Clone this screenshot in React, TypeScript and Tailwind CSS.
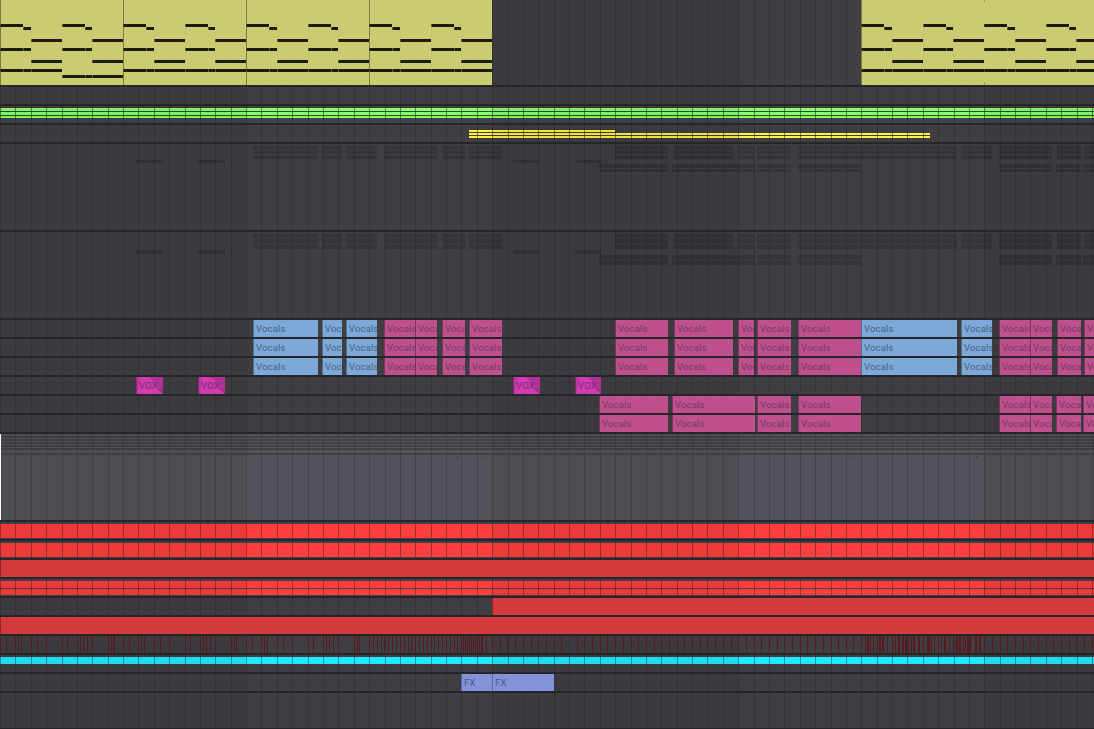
import React from 'react';

type Span = [start: number, end: number];
type Tone = 'blue' | 'pink' | 'vox' | 'fx' | 'red';

interface Clip {
  start: number;
  end: number;
  tone: Tone;
  label?: string;
}

interface NoteRow {
  y: number;
  h: number;
  spans: Span[];
}

const WIDTH = 1094;
const BEAT = 15.38;

const beats = Array.from({ length: 72 }, (_, i) => Math.round(i * BEAT));
const full: Span[] = [[0, WIDTH]];

const toneClasses: Record<Tone, string> = {
  blue: 'bg-[#7ca9d8] border-[#526f8e] text-[#48627d]',
  pink: 'bg-[#bf508d] border-[#7b3760] text-[#6f3c62]',
  vox: 'bg-[#d33bb2] border-[#852a72] text-[#743169]',
  fx: 'bg-[#8393d9] border-[#5a659a] text-[#4f5981]',
  red: 'bg-[#d43a3c] border-[#8a292c] text-[#8a292c]',
};

const clips = (tone: Tone, label: string, spans: Span[]): Clip[] =>
  spans.map(([start, end]) => ({ start, end, tone, label }));

const leadClips: Clip[] = [
  ...clips('blue', 'Vocals', [[253, 318], [322, 342], [346, 377]]),
  ...clips('pink', 'Vocals', [
    [384, 415], [415, 437], [442, 465], [469, 502], [615, 668], [674, 733], [738, 754], [757, 791], [798, 861],
  ]),
  ...clips('blue', 'Vocals', [[861, 957], [961, 992]]),
  ...clips('pink', 'Vocals', [[999, 1030], [1030, 1052], [1057, 1081], [1084, 1094]]),
];

const backingClips = clips('pink', 'Vocals', [
  [599, 668], [672, 755], [757, 791], [798, 861], [999, 1030], [1030, 1052], [1056, 1081], [1083, 1094],
]);

const voxSpans: Span[] = [[136, 163], [198, 225], [513, 540], [575, 601]];

const leadSpans: Span[] = [
  [253, 318], [322, 342], [346, 377], [384, 437], [442, 465], [469, 502], [615, 668], [674, 733],
  [738, 754], [757, 791], [798, 957], [961, 992], [999, 1052], [1057, 1081], [1084, 1094],
];

const backingSpans: Span[] = [
  [599, 668], [672, 755], [757, 791], [798, 861], [999, 1052], [1056, 1081], [1083, 1094],
];

const groupA: NoteRow[] = [
  { y: 2, h: 4, spans: leadSpans },
  { y: 7, h: 3, spans: leadSpans },
  { y: 11, h: 4, spans: leadSpans },
  { y: 16, h: 3, spans: voxSpans },
  { y: 20, h: 4, spans: backingSpans },
  { y: 25, h: 3, spans: backingSpans },
];

const groupB: NoteRow[] = [
  { y: 2, h: 4, spans: leadSpans },
  { y: 7, h: 5, spans: leadSpans },
  { y: 13, h: 4, spans: leadSpans },
  { y: 18, h: 4, spans: voxSpans },
  { y: 23, h: 5, spans: backingSpans },
  { y: 29, h: 4, spans: backingSpans },
];

const steady = Array.from({ length: 25 }, (_, i) => Math.round((86 + i) * 7.69));

const hits: number[] = [
  0, 6, 15, 18, 21, 31, 37, 46, 62, 67, 77, 80, 83, 87, 92, 108, 111, 113, 114, 123, 129, 138, 141, 144, 154, 160,
  169, 185, 190, 200, 203, 206, 210, 215, 231, 234, 236, 246, 252, 261, 264, 267, 277, 283, 292, 308, 313, 323, 326,
  329, 333, 338, 354, 357, 359, 369, 373, 377, 381, 384, 388, 392, 396, 400, 404, 408, 411, 415, 419, 423, 427, 431,
  434, 438, 442, 446, 450, 454, 457, 461, 463, 465, 467, 469, 471, 473, 475, 477, 479, 481, 482, 486, 492, 500, 507,
  515, 523, 531, 538, 546, 554, 561, 577, 584, 592, 600, 607, 615, 623, 631, 638, 646, 654, ...steady, 853, 861, 865,
  867, 868, 870, 873, 877, 879, 880, 882, 883, 887, 892, 895, 898, 899, 902, 903, 905, 906, 908, 911, 913, 914, 918,
  919, 923, 927, 928, 929, 931, 934, 938, 941, 944, 945, 949, 953, 956, 957, 959, 960, 963, 965, 967, 968, 969, 970,
  975, 976, 979, 980, 984, 992, 1000, 1007, 1015, 1023, 1030, 1038, 1046, 1053, 1061, 1069, 1076, 1084, 1092,
];

// Chord pattern, relative to the start of a bar
const chordNotes: [x: number, end: number, y: number][] = [
  [0, 23, 24], [23, 31, 27], [62, 85, 24], [85, 92, 27],
  [31, 62, 39], [92, 123, 39],
  [0, 23, 48], [23, 31, 48], [62, 85, 48], [85, 92, 48],
  [31, 62, 60], [92, 123, 60],
];

const bassNotes: Span[] = [[0, 23], [23, 31], [31, 62], [62, 85], [85, 92], [92, 123]];

const Lane: React.FC<{ height: number; className?: string; children?: React.ReactNode }> = ({
  height,
  className = '',
  children,
}) => (
  <div className="shrink-0">
    <div className={`overflow-hidden ${className}`} style={{ height }}>
      {children}
    </div>
    <div className="relative z-20 h-0.5 bg-[#26252a]" />
  </div>
);

const ClipLane: React.FC<{ items: Clip[] }> = ({ items }) => (
  <Lane height={17}>
    <div className="relative z-20 flex h-full">
      {items.map((clip, i) => (
        <div
          key={clip.start}
          className={`relative flex h-full shrink-0 items-center overflow-hidden border-l pl-0.5 text-[9.5px] leading-none tracking-[0.15px] whitespace-nowrap ${toneClasses[clip.tone]}`}
          style={{ width: clip.end - clip.start, marginLeft: clip.start - (i > 0 ? items[i - 1].end : 0) }}
        >
          {clip.tone === 'vox' && (
            <svg className="absolute inset-0 h-full w-full" viewBox="0 0 26 17" preserveAspectRatio="none">
              <path d="M11 0 C16 3 20 8 22 14 L26 17 V0 Z" fill="#b03299" />
              <path d="M21 12 L26 17 V14 L23 14 Z" fill="#84397a" />
              <path d="M0 0 H4 C2 4 2 12 1 17 H0 Z" fill="#bd36a1" />
            </svg>
          )}
          <span className="relative">{clip.label}</span>
        </div>
      ))}
    </div>
  </Lane>
);

const NoteLane: React.FC<{
  height: number;
  rows: NoteRow[];
  color: string;
  className?: string;
  lines?: number;
}> = ({ height, rows, color, className = '', lines = 0 }) => (
  <Lane height={height} className={className}>
    <svg width={WIDTH} height={height} shapeRendering="crispEdges" className="block">
      {rows.map((row) =>
        row.spans.map(([start, end]) => (
          <g key={`${row.y}-${start}`}>
            <rect x={start} y={row.y} width={end - start} height={row.h} fill={color} />
            {lines > 0 &&
              beats
                .filter((x) => x >= start && x < end)
                .map((x) => <rect key={x} x={x} y={row.y} width={1} height={row.h} fill="#25252a" opacity={lines} />)}
          </g>
        )),
      )}
    </svg>
  </Lane>
);

const ChordBar: React.FC<{ x: number; variant?: boolean; joined?: boolean }> = ({ x, variant, joined }) => (
  <g transform={`translate(${x} 0)`}>
    <rect width={123} height={85} fill="#cccb72" />
    {[15, 31, 46, 62, 77, 92, 108].map((b) => (
      <rect key={b} x={b} width={1} height={85} fill="#c8c76f" />
    ))}
    {!joined && <rect width={1} height={85} fill="#7c7b49" />}
    {joined && <rect width={1} height={2} fill="#a49c36" />}
    {joined && <rect y={82} width={1} height={3} fill="#a49c36" />}
    {[
      ...chordNotes,
      ...bassNotes.map(([s, e]): [number, number, number] => [s, e, variant && s >= 62 ? 75 : 69]),
    ].map(([s, e, y]) => (
      <g key={`${s}-${y}`}>
        <rect x={s} y={y} width={e - s} height={3} fill="#1c1c10" />
        <rect x={s} y={y} width={1} height={3} fill={s === 0 ? '#45442a' : '#5c5b34'} />
      </g>
    ))}
  </g>
);

const TimelineGrid: React.FC = () => (
  <svg
    width={WIDTH}
    height={729}
    shapeRendering="crispEdges"
    className="pointer-events-none absolute inset-0 z-10"
  >
    {[0, 492, 984].map((x) => (
      <rect key={x} x={x} width={246} height={729} fill="#000" opacity={0.06} />
    ))}
    {beats.map((x) => (
      <rect key={x} x={x} width={1} height={729} fill="#000" opacity={0.17} />
    ))}
  </svg>
);

export default function App() {
  return (
    <div className="relative flex h-[729px] w-[1094px] flex-col overflow-hidden bg-[#3f3e43] font-['Roboto',sans-serif]">
      <TimelineGrid />

      {/* Chords */}
      <Lane height={85}>
        <svg width={WIDTH} height={85} shapeRendering="crispEdges" className="relative z-20 block">
          <ChordBar x={0} variant />
          <ChordBar x={123} />
          <ChordBar x={246} />
          <ChordBar x={369} />
          <ChordBar x={861} />
          <ChordBar x={984} joined />
        </svg>
      </Lane>
      <Lane height={17} />
      <NoteLane
        height={17}
        color="#8aff6c"
        className="bg-[linear-gradient(#3f3e43_0_2px,#294c2b_2px_12px,#40454a_12px)]"
        lines={0.45}
        rows={[
          { y: 2, h: 3, spans: full },
          { y: 6, h: 3, spans: full },
          { y: 10, h: 2, spans: full },
        ]}
      />
      <NoteLane
        height={17}
        color="#fff240"
        lines={0.4}
        rows={[
          { y: 5, h: 2, spans: [[469, 615]] },
          { y: 8, h: 2, spans: [[469, 930]] },
          { y: 11, h: 2, spans: [[469, 930]] },
        ]}
      />

      {/* Vocal groups */}
      <NoteLane height={86} color="#353439" rows={groupA} />
      <NoteLane height={86} color="#353439" rows={groupB} />
      <ClipLane items={leadClips} />
      <ClipLane items={leadClips} />
      <ClipLane items={leadClips} />
      <ClipLane items={clips('vox', 'VOX_', voxSpans)} />
      <ClipLane items={backingClips} />
      <ClipLane items={backingClips} />

      {/* Drum group */}
      <Lane height={86} className="bg-[#52535a]">
        <svg width={WIDTH} height={86} shapeRendering="crispEdges" className="block">
          {[2, 5, 8, 11, 14, 19].map((y) => (
            <rect key={y} y={y} width={WIDTH} height={2} fill="#424248" />
          ))}
          {[457, 482, 853, 976].map((x) => (
            <rect key={x} x={x} y={22} width={1} height={2} fill="#3b3b41" />
          ))}
        </svg>
        <div className="relative z-20 -mt-[86px] h-[86px] w-px bg-white" />
      </Lane>
      <NoteLane height={17} color="#fe3e3e" className="bg-[#40444a]" lines={0.27} rows={[{ y: 2, h: 14, spans: full }]} />
      <NoteLane height={17} color="#fe3e3e" className="bg-[#40444a]" lines={0.27} rows={[{ y: 2, h: 14, spans: full }]} />
      <ClipLane items={[{ start: 0, end: WIDTH, tone: 'red' }]} />
      <NoteLane
        height={17}
        color="#fe3e3e"
        className="bg-[#40444a]"
        lines={0.27}
        rows={[
          { y: 2, h: 7, spans: full },
          { y: 10, h: 6, spans: full },
        ]}
      />
      <ClipLane items={[{ start: 492, end: WIDTH, tone: 'red' }]} />
      <ClipLane items={[{ start: 0, end: WIDTH, tone: 'red' }]} />
      <Lane height={17}>
        <svg width={WIDTH} height={17} shapeRendering="crispEdges" className="relative z-20 block">
          {hits.map((x) => (
            <rect key={x} x={x} width={1} height={17} fill="#591a1e" />
          ))}
        </svg>
      </Lane>

      {/* Bass and effects */}
      <NoteLane height={17} color="#22e8ff" lines={0.28} rows={[{ y: 2, h: 7, spans: full }]} />
      <ClipLane items={clips('fx', 'FX', [[461, 492], [492, 554]])} />
      <Lane height={35} />
    </div>
  );
}
